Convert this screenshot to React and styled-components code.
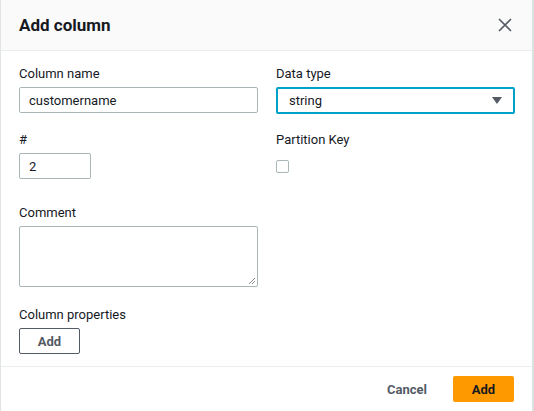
import React from "react"
import styled, { createGlobalStyle } from "styled-components"

const GlobalStyle = createGlobalStyle`
  html, body {
    margin: 0;
    padding: 0;
    background: #ffffff;
  }
  body {
    font-family: Roboto, "Noto Sans", Arial, sans-serif;
    color: #16191f;
  }
`

const Modal = styled.div`
  width: 534px;
  height: 411px;
  border-left: 1px solid #e1e4e4;
  border-right: 2px solid #dde1e1;
  display: flex;
  flex-direction: column;
  box-sizing: border-box;
`

const Header = styled.header`
  flex-shrink: 0;
  height: 51px;
  background: #fafafa;
  border-bottom: 1px solid #eaeded;
  display: flex;
  align-items: center;
  justify-content: space-between;
  padding: 0 17px 0 18px;
  box-sizing: border-box;
`

const Title = styled.h2`
  margin: 0;
  font-size: 17px;
  font-weight: 700;
  color: #16191f;
`

const CloseButton = styled.button`
  border: 0;
  background: none;
  padding: 0;
  width: 20px;
  height: 20px;
  display: flex;
  align-items: center;
  justify-content: center;
`

const Body = styled.div`
  flex: 1;
  padding: 12px 0 0 18px;
  display: grid;
  grid-template-columns: 239px 238px;
  column-gap: 18px;
  align-content: start;
`

const Column = styled.div`
  display: flex;
  flex-direction: column;
`

const Field = styled.div`
  display: flex;
  flex-direction: column;
  align-items: flex-start;
  margin-bottom: ${(p) => p.$gap || 0}px;
`

const Label = styled.label`
  font-size: 13px;
  line-height: 22px;
  color: #16191f;
  margin-bottom: ${(p) => p.$gap || 2}px;
`

const Input = styled.div`
  box-sizing: border-box;
  width: ${(p) => p.$width || "239px"};
  height: ${(p) => p.$height || "26px"};
  border: ${(p) => (p.$focused ? "2px solid #00a1c9" : "1px solid #aab7b8")};
  border-radius: 2px;
  padding: 0 ${(p) => (p.$focused ? 11 : 9)}px;
  font-size: 13px;
  display: flex;
  align-items: center;
  justify-content: space-between;
  color: #16191f;
  position: relative;
`

const Grip = styled.svg`
  position: absolute;
  right: 1px;
  bottom: 1px;
`

const Checkbox = styled.span`
  display: block;
  width: 13px;
  height: 13px;
  box-sizing: border-box;
  border: 1px solid #aab7b8;
  border-radius: 2px;
`

const Button = styled.button`
  box-sizing: border-box;
  height: 26px;
  width: ${(p) => p.$width || "auto"};
  padding: 0;
  font-family: inherit;
  font-size: 13px;
  font-weight: 700;
  border-radius: 2px;
  border: ${(p) => (p.$variant === "normal" ? "1px solid #545b64" : "1px solid transparent")};
  background: ${(p) => (p.$variant === "primary" ? "#ff9900" : "transparent")};
  color: ${(p) => (p.$variant === "primary" ? "#16191f" : "#545b64")};
`

const Footer = styled.footer`
  flex-shrink: 0;
  height: 45px;
  box-sizing: border-box;
  border-top: 1px solid #eaeded;
  display: flex;
  align-items: flex-start;
  justify-content: flex-end;
  gap: 8px;
  padding: 9px 18px 0 0;
`

export default function App() {
  return (
    <>
      <GlobalStyle />
      <Modal>
        <Header>
          <Title>Add column</Title>
          <CloseButton aria-label="Close">
            <svg width="14" height="14" viewBox="0 0 14 14">
              <path d="M1.5 1.5 L12.5 12.5 M12.5 1.5 L1.5 12.5" stroke="#545b64" strokeWidth="1.7" strokeLinecap="round" />
            </svg>
          </CloseButton>
        </Header>
        <Body>
          <Column>
            <Field $gap={16}>
              <Label>Column name</Label>
              <Input>customername</Input>
            </Field>
            <Field $gap={23}>
              <Label>#</Label>
              <Input $width="72px">2</Input>
            </Field>
            <Field $gap={17}>
              <Label>Comment</Label>
              <Input $height="61px">
                <Grip width="8" height="8" viewBox="0 0 8 8">
                  <path d="M7 1 L1 7 M7 4 L4 7" stroke="#8a8a8a" strokeWidth="1" />
                </Grip>
              </Input>
            </Field>
            <Field>
              <Label>Column properties</Label>
              <Button $variant="normal" $width="61px">Add</Button>
            </Field>
          </Column>
          <Column>
            <Field $gap={15}>
              <Label>Data type</Label>
              <Input $width="239px" $height="27px" $focused>
                string
                <svg width="10" height="7" viewBox="0 0 10 7">
                  <path d="M0 0 L10 0 L5 7 Z" fill="#545b64" />
                </svg>
              </Input>
            </Field>
            <Field>
              <Label $gap={9}>Partition Key</Label>
              <Checkbox />
            </Field>
          </Column>
        </Body>
        <Footer>
          <Button $variant="link" $width="76px">Cancel</Button>
          <Button $variant="primary" $width="61px">Add</Button>
        </Footer>
      </Modal>
    </>
  )
}
